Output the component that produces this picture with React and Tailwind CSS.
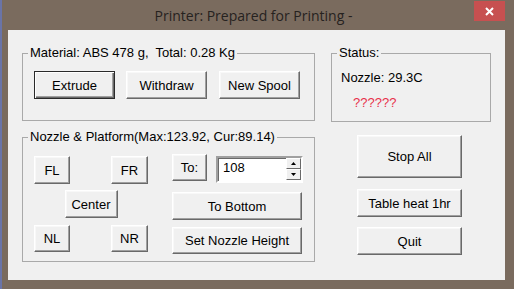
import React from "react";

function cx(...c) {
  return c.filter(Boolean).join(" ");
}

// classic win32 push button
function Btn({ children, className, isDefault }) {
  return (
    <button
      type="button"
      className={cx(
        "flex items-center justify-center bg-[#f0f0f0] text-[13px] leading-none text-black",
        isDefault
          ? "border border-[#2a2a2a] shadow-[inset_1px_1px_0_#ffffff,inset_-1px_-1px_0_#696969,inset_-2px_-2px_0_#a0a0a0]"
          : "border border-t-white border-l-white border-b-[#696969] border-r-[#696969] shadow-[inset_-1px_-1px_0_#a0a0a0,inset_1px_1px_0_#f8f8f8]",
        className
      )}
    >
      {children}
    </button>
  );
}

function Group({ title, className, children }) {
  return (
    <fieldset className={cx("border border-[#a9a9a9] p-0 m-0 min-w-0", className)}>
      <legend className="ml-[5px] px-[2px] text-[13px] leading-[16px] text-black">{title}</legend>
      {children}
    </fieldset>
  );
}

function Spin({ value }) {
  return (
    <div className="mt-[2px] ml-[9px] flex h-[27px] w-[87px] border-2 border-t-[#a0a0a0] border-l-[#a0a0a0] border-b-white border-r-white bg-white shadow-[inset_1px_1px_0_#696969]">
      <div className="flex-1 pl-[5px] pt-[2px] text-[13px] leading-[16px] text-black">{value}</div>
      <div className="flex w-[15px] flex-col">
        {["up", "down"].map((d) => (
          <div
            key={d}
            className="flex h-[11px] items-center justify-center bg-[#f0f0f0] border border-t-white border-l-white border-b-[#696969] border-r-[#696969]"
          >
            <svg width="5" height="3" viewBox="0 0 5 3">
              {d === "up" ? <polygon points="2.5,0 5,3 0,3" fill="#000" /> : <polygon points="0,0 5,0 2.5,3" fill="#000" />}
            </svg>
          </div>
        ))}
      </div>
    </div>
  );
}

export default function App() {
  return (
    <div className="flex h-[289px] w-[514px] flex-col overflow-hidden border-l-2 border-[#6a74a8] bg-[#7a6b5e] font-['Liberation_Sans',Arial,sans-serif]">
      {/* title bar */}
      <div className="flex h-[30px] items-start">
        <div className="flex-1" />
        <div className="pt-[6px] font-['Open_Sans',sans-serif] text-[14px] leading-[20px] text-[#26221f]">
          Printer: Prepared for Printing -
        </div>
        <div className="flex flex-1 justify-end pr-[9px] pt-[1px]">
          <div className="flex h-[20px] w-[31px] items-center justify-center bg-[#c75050]">
            <svg width="9" height="9" viewBox="0 0 9 9">
              <path d="M1 1 L8 8 M8 1 L1 8" stroke="#fff" strokeWidth="2" />
            </svg>
          </div>
        </div>
      </div>

      {/* client area */}
      <div className="ml-[6px] flex h-[250px] w-[497px] gap-[16px] bg-[#f0f0f0] pl-[14px] pt-[15px]">
        <div className="flex w-[293px] flex-col">
          <Group title={"Material: ABS 478 g,\u00a0 Total: 0.28 Kg"}>
            <div className="mt-[10px] flex gap-[11px] pb-[21px] pl-[11px]">
              <Btn isDefault className="h-[28px] w-[81px]">Extrude</Btn>
              <Btn className="h-[28px] w-[81px]">Withdraw</Btn>
              <Btn className="ml-[1px] h-[28px] w-[81px]">New Spool</Btn>
            </div>
          </Group>

          <Group title="Nozzle & Platform(Max:123.92, Cur:89.14)" className="mt-[8px]">
            <div className="flex items-start gap-[24px] pb-[7px] pl-[11px]">
              <div className="mt-[11px] flex w-[114px] flex-col">
                <div className="flex justify-between">
                  <Btn className="h-[28px] w-[36px]">FL</Btn>
                  <Btn className="h-[28px] w-[37px]">FR</Btn>
                </div>
                <div className="mt-[6px] flex justify-center">
                  <Btn className="h-[28px] w-[53px]">Center</Btn>
                </div>
                <div className="mt-[7px] flex justify-between">
                  <Btn className="h-[27px] w-[36px]">NL</Btn>
                  <Btn className="h-[27px] w-[37px]">NR</Btn>
                </div>
              </div>
              <div className="mt-[9px] flex w-[131px] flex-col">
                <div className="flex items-start">
                  <Btn className="h-[27px] w-[35px]">To:</Btn>
                  <Spin value="108" />
                </div>
                <Btn className="mt-[9px] h-[28px] w-[130px]">To Bottom</Btn>
                <Btn className="mt-[7px] h-[27px] w-[130px]">Set Nozzle Height</Btn>
              </div>
            </div>
          </Group>
        </div>

        <div className="flex w-[160px] flex-col">
          <Group title="Status:">
            <div className="pb-[10px] pl-[9px] text-[13px] leading-[16px]">
              <div className="mt-[9px] text-black">Nozzle: 29.3C</div>
              <div className="ml-[12px] mt-[9px] text-[#e8304a]">??????</div>
            </div>
          </Group>
          <Btn className="ml-[26px] mt-[13px] h-[43px] w-[105px]">Stop All</Btn>
          <Btn className="ml-[26px] mt-[11px] h-[28px] w-[105px]">Table heat 1hr</Btn>
          <Btn className="ml-[26px] mt-[10px] h-[28px] w-[105px]">Quit</Btn>
        </div>
      </div>
    </div>
  );
}
